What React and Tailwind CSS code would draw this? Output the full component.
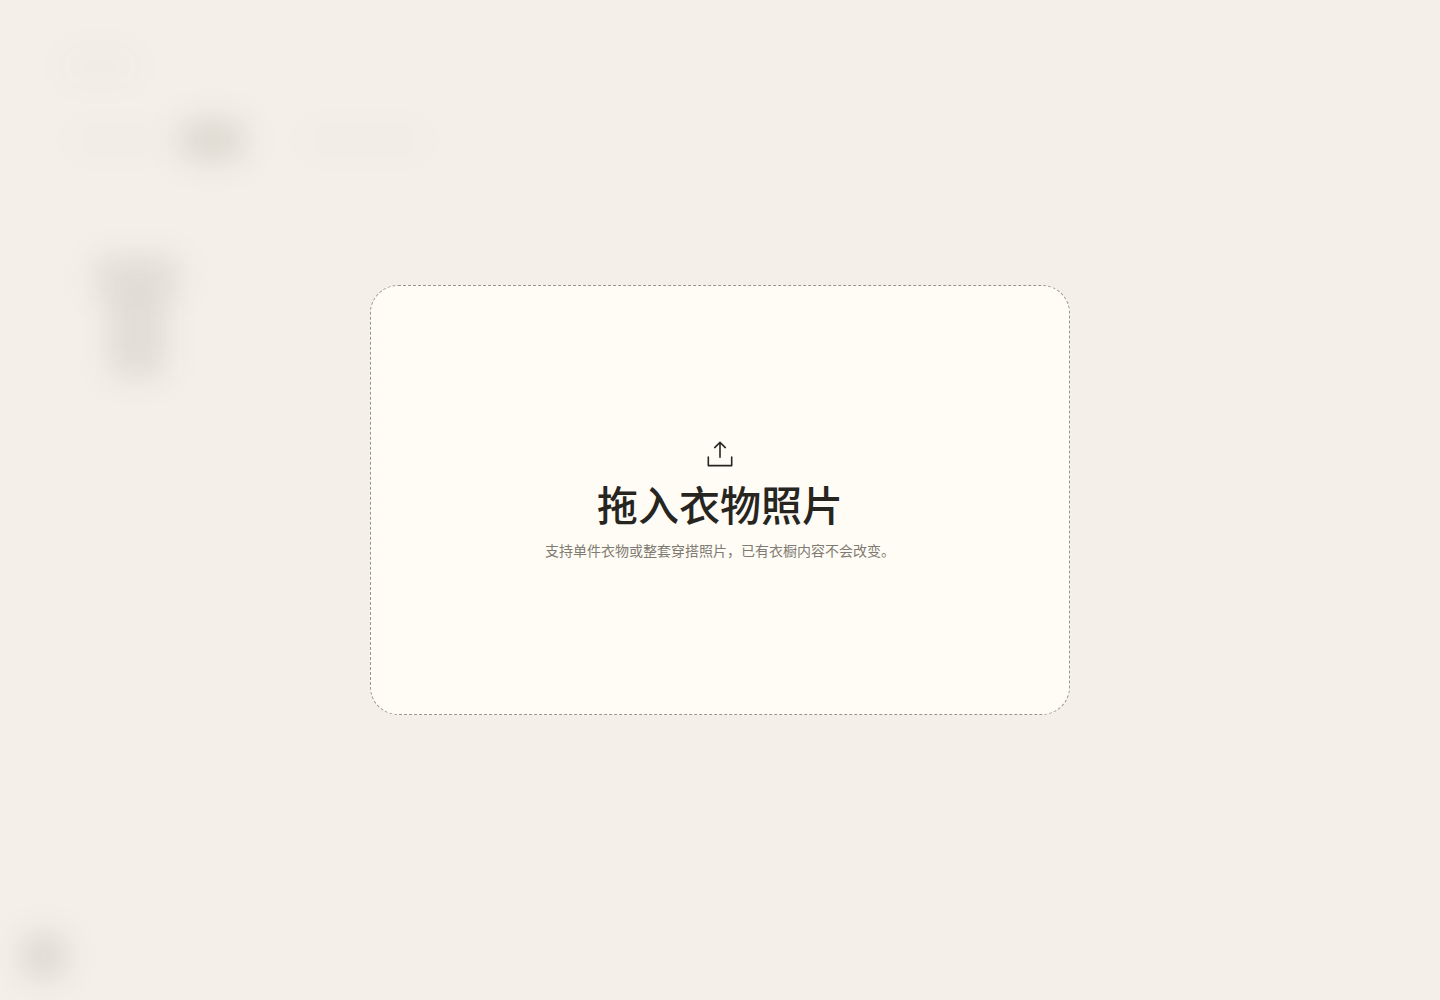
import { PiUploadSimpleLight } from "react-icons/pi";

function Backdrop() {
  return (
    <div aria-hidden="true" className="flex min-h-screen flex-col px-5 pt-12 pb-5">
      <div className="ml-10 h-9 w-20 rounded-full bg-[#27251f]/2 blur-[16px]" />
      <div className="mt-9 ml-12 flex h-10 items-center">
        <div className="h-9 w-24 rounded-full bg-[#27251f]/1 blur-[16px]" />
        <div className="ml-4 h-10 w-16 rounded-xl bg-[#27251f]/11 blur-[16px]" />
        <div className="ml-14 h-9 w-32 rounded-full bg-[#27251f]/1 blur-[16px]" />
      </div>
      <svg className="mt-16 ml-8 h-52 w-44 overflow-visible blur-[16px]" viewBox="0 0 176 208">
        <path
          d="M44 34H126V72H112V152H58V72H44Z"
          fill="#2c3427"
          fillOpacity="0.098"
        />
      </svg>
      <div className="mt-auto size-12 rounded-full bg-[#27251f]/11 blur-[16px]" />
    </div>
  );
}

export default function App() {
  return (
    <div
      lang="zh-CN"
      className="relative min-h-screen overflow-hidden bg-[#f4efe8] font-['Noto_Sans_CJK_SC',sans-serif]"
    >
      <Backdrop />
      <div className="absolute inset-0 flex items-center justify-center p-6">
        <section
          aria-labelledby="drop-title"
          className="flex min-h-[430px] w-full max-w-[700px] flex-col items-center justify-center rounded-[28px] border border-dashed border-[#99958d] bg-[#fffcf5] p-6 text-center"
        >
          <PiUploadSimpleLight aria-hidden="true" className="size-[34px] text-[#27251f]" />
          <h1
            id="drop-title"
            className="mt-2 text-[41px] leading-[46px] font-medium text-[#27251f]"
          >
            拖入衣物照片
          </h1>
          <p className="mt-3 text-sm leading-6 text-[#807b72]">
            支持单件衣物或整套穿搭照片，已有衣橱内容不会改变。
          </p>
        </section>
      </div>
    </div>
  );
}
